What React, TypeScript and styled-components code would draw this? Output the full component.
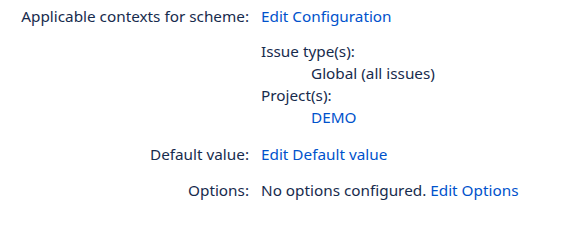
import React from 'react';
import styled, { createGlobalStyle } from 'styled-components';

const GlobalStyle = createGlobalStyle`
  body {
    margin: 0;
    background: #ffffff;
    font-family: "Noto Sans", "Open Sans", sans-serif;
    font-size: 15.3px;
    color: #172b4d;
  }
`;

const FieldTable = styled.div`
  display: grid;
  grid-template-columns: 249px 1fr;
  column-gap: 12px;
  row-gap: 16px;
  padding-top: 6px;
  line-height: 20px;
`;

const Label = styled.div`
  text-align: right;
  white-space: nowrap;
`;

const Value = styled.div`
  white-space: nowrap;
`;

const Link = styled.a`
  color: #0052cc;
  text-decoration: none;
  cursor: pointer;
`;

const ContextList = styled.dl`
  margin: 14px 0 0;
  line-height: 22px;
`;

const ContextTerm = styled.dt`
  margin: 0;
`;

const ContextItem = styled.dd`
  margin: 0 0 0 50px;
`;

const App: React.FC = () => {
  return (
    <>
      <GlobalStyle />
      <FieldTable>
        <Label>Applicable contexts for scheme:</Label>
        <Value>
          <Link>Edit Configuration</Link>
          <ContextList>
            <ContextTerm>Issue type(s):</ContextTerm>
            <ContextItem>Global (all issues)</ContextItem>
            <ContextTerm>Project(s):</ContextTerm>
            <ContextItem>
              <Link>DEMO</Link>
            </ContextItem>
          </ContextList>
        </Value>

        <Label>Default value:</Label>
        <Value>
          <Link>Edit Default value</Link>
        </Value>

        <Label>Options:</Label>
        <Value>
          No options configured. <Link>Edit Options</Link>
        </Value>
      </FieldTable>
    </>
  );
};

export default App;
